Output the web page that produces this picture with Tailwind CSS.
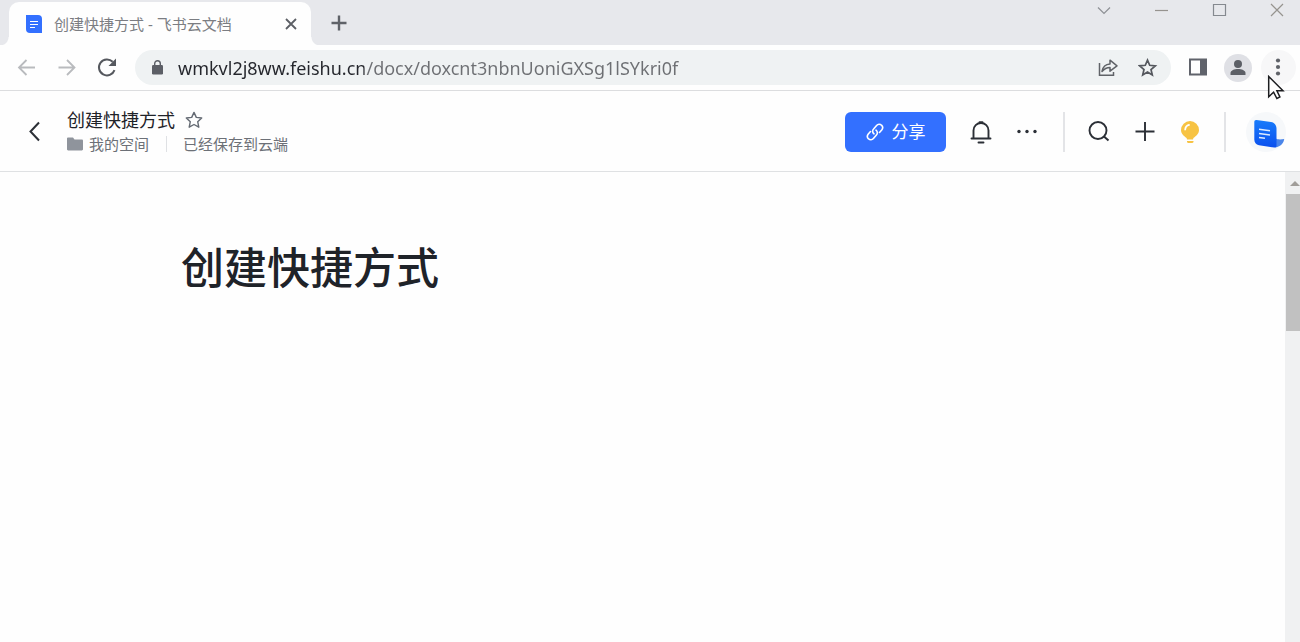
<!DOCTYPE html>
<html lang="zh-CN">
<head>
  <meta charset="UTF-8" />
  <meta name="viewport" content="width=device-width, initial-scale=1.0"/>
  <title>创建快捷方式 - 飞书云文档</title>
  <script src="https://cdn.jsdelivr.net/npm/@tailwindcss/browser@4"></script>
</head>
<body class="relative flex flex-col h-screen overflow-hidden bg-[#fefefe] text-[#1f2329] font-['Noto_Sans','Noto_Sans_CJK_SC',sans-serif]">

  <!-- Tab strip -->
  <div class="flex items-start h-[45px] shrink-0 bg-[#e7e8ec]">
    <div class="flex items-end self-stretch">
      <div class="w-[9px] h-2 bg-[radial-gradient(circle_at_0_0,#e7e8ec_8px,#fefefe_9px)]"></div>
      <div class="flex items-center w-[302px] h-[43px] pl-4 pr-3 rounded-t-[10px] bg-[#fefefe]">
        <svg class="w-[18px] h-[18px] shrink-0" viewBox="0 0 18 18">
          <path d="M1 0h12a4 4 0 0 1 4 4v14H5a4 4 0 0 1-4-4z" fill="#3370ff"/>
          <path d="M5 6.500h8M5 9.500h8M5 12.500h5" stroke="#fff" stroke-width="1.200"/>
        </svg>
        <span class="ml-[11px] flex-1 text-[15px] leading-5 text-[#7b7d82] whitespace-nowrap">创建快捷方式 - 飞书云文档</span>
        <button type="button" aria-label="关闭标签页" class="flex items-center justify-center w-4 h-4">
          <svg class="w-4 h-4" viewBox="0 0 16 16" fill="none" stroke="#5c5f65" stroke-width="1.800"><path d="M3 3l10 10M13 3L3 13"/></svg>
        </button>
      </div>
      <div class="w-[9px] h-2 bg-[radial-gradient(circle_at_100%_0,#e7e8ec_8px,#fefefe_9px)]"></div>
    </div>
    <button type="button" aria-label="新建标签页" class="flex items-center justify-center ml-[10px] mt-[14px] w-[18px] h-[18px]">
      <svg class="w-[18px] h-[18px]" viewBox="0 0 18 18" fill="none" stroke="#5f6268" stroke-width="2.400"><path d="M9 1.500v15M1.500 9h15"/></svg>
    </button>
    <div class="flex gap-[38px] ml-auto mr-3">
      <button type="button" aria-label="搜索标签页" class="w-5 h-5"><svg viewBox="0 0 20 20" fill="none" stroke="#8e9095" stroke-width="1.200"><path d="M4 7.500l6 6 6-6"/></svg></button>
      <button type="button" aria-label="最小化" class="w-5 h-5"><svg viewBox="0 0 20 20" fill="none" stroke="#96938f" stroke-width="1.200"><path d="M3 10.500h13"/></svg></button>
      <button type="button" aria-label="最大化" class="w-5 h-5"><svg viewBox="0 0 20 20" fill="none" stroke="#85898f" stroke-width="1.200"><path d="M3.500 4.500h12v11h-12z"/></svg></button>
      <button type="button" aria-label="关闭" class="w-5 h-5"><svg viewBox="0 0 20 20" fill="none" stroke="#96938f" stroke-width="1.200"><path d="M3 4l12 12M15 4L3 16"/></svg></button>
    </div>
  </div>

  <!-- Toolbar -->
  <div class="flex items-center h-[46px] shrink-0 border-b border-[#dcdddf] pl-4 pr-1">
    <div class="flex items-center gap-5">
      <button type="button" aria-label="后退" class="w-5 h-5"><svg viewBox="0 0 20 20" fill="none" stroke="#b9bbbe" stroke-width="1.800"><path d="M19 9.500H3M10.500 2L3 9.500l7.500 7.500"/></svg></button>
      <button type="button" aria-label="前进" class="w-5 h-5"><svg viewBox="0 0 20 20" fill="none" stroke="#b9bbbe" stroke-width="1.800"><path d="M2.500 9.500h16M11 2l7.500 7.500L11 17"/></svg></button>
      <button type="button" aria-label="重新加载" class="w-5 h-5"><svg viewBox="0 0 20 20"><path d="M18.500 12.100a8 8 0 1 1-1.800-8.300" fill="none" stroke="#55585e" stroke-width="2"/><path d="M20 .5V8h-7.500z" fill="#55585e"/></svg></button>
    </div>
    <label class="flex items-center flex-1 h-[35px] ml-[19px] pl-4 pr-[13px] rounded-full bg-[#eff2f3]">
      <svg class="w-[13px] h-[15px] shrink-0" viewBox="0 0 13 15"><rect x="1" y="5" width="11" height="9.500" rx="1.200" fill="#5c5f66"/><path d="M3.700 6V3.500a2.800 2.800 0 0 1 5.600 0V6" fill="none" stroke="#5c5f66" stroke-width="1.400"/></svg>
      <input type="text" aria-label="地址栏" value="wmkvl2j8ww.feishu.cn/docx/doxcnt3nbnUoniGXSg1lSYkri0f" class="flex-1 min-w-0 h-7 ml-[14px] text-[18px] outline-none text-transparent bg-clip-text bg-[linear-gradient(90deg,#24262c_186px,#6d6f73_186px)]"/>
      <button type="button" aria-label="分享此页面" class="w-[22px] h-5"><svg viewBox="0 0 22 20" fill="none" stroke="#606368" stroke-width="1.500"><path d="M1.500 5v12.200h14V14"/><path d="M4 13.500c.8-4.500 3.800-7.300 8-7.500V2.200l7 5.600-7 5.400V9.400c-3.200 0-5.700 1.200-8 4.100z" stroke-linejoin="round"/></svg></button>
      <button type="button" aria-label="为此页添加书签" class="w-5 h-5 ml-[18px]"><svg viewBox="0 0 20 20" fill="none" stroke="#55585e" stroke-width="1.700"><path d="M9.500 2.100l2.200 5.200 5.600.5-4.300 3.700 1.300 5.500-4.800-2.900L4.700 17 6 11.500 1.700 7.800l5.600-.5z"/></svg></button>
    </label>
    <button type="button" aria-label="侧边栏" class="w-5 h-5 ml-[18px]"><svg viewBox="0 0 20 20"><path fill-rule="evenodd" d="M0 .5h18v17H0zM2 2.500v13h9v-13z" fill="#60636b"/></svg></button>
    <button type="button" aria-label="个人资料" class="w-7 h-7 ml-[15px]"><svg viewBox="0 0 28 28"><circle cx="14" cy="14" r="14" fill="#dfe0e5"/><circle cx="14" cy="10" r="4" fill="#5c5f66"/><path d="M6.500 21v-2c0-2.500 4-4 7.500-4s7.500 1.500 7.500 4v2z" fill="#5c5f66"/></svg></button>
    <button type="button" aria-label="自定义及控制" class="w-[35px] h-[35px] ml-[9px] rounded-full bg-[#f7f7f8]"><svg viewBox="0 0 35 35" fill="#5f6268"><circle cx="17" cy="10.500" r="2.100"/><circle cx="17" cy="17" r="2.100"/><circle cx="17" cy="23.500" r="2.100"/></svg></button>
  </div>

  <!-- Document header -->
  <header class="flex items-center justify-between h-[81px] shrink-0 border-b border-[#dfe1e3] pt-0.5 pl-6 pr-[14px]">
    <div class="flex items-center">
      <button type="button" aria-label="返回" class="w-5 h-6"><svg viewBox="0 0 20 24" fill="none" stroke="#2b2f36" stroke-width="2"><path d="M15 2.500L6.500 11.500l8.500 9"/></svg></button>
      <div class="ml-[23px]">
        <div class="flex items-center h-6">
          <span class="text-[18px] leading-6">创建快捷方式</span>
          <button type="button" aria-label="收藏" class="w-[18px] h-[18px] ml-[10px]"><svg viewBox="0 0 18 18" fill="none" stroke="#646a73" stroke-width="1.400" stroke-linejoin="round"><path d="M9 1.400l2.300 5 5.400.6-4 3.700 1.100 5.500L9 13.500l-4.800 2.700 1.100-5.500-4-3.700 5.400-.6z"/></svg></button>
        </div>
        <div class="flex items-center h-6 text-[15px] leading-6 text-[#6c7077]">
          <svg class="w-4 h-[14px] mr-[6px]" viewBox="0 0 16 14"><path d="M0 1.500C0 .7.600.500 1.200.500H6l1.500 2h7.300c.7 0 1.200.4 1.200 1.200v8.600c0 .7-.5 1.200-1.200 1.200H1.200C.5 13.500 0 13 0 12.300z" fill="#8f949c"/></svg>
          <a href="#" class="text-[#6c7077]">我的空间</a>
          <div class="w-px h-4 ml-[17px] mr-4 bg-[#dfe1e4]"></div>
          <span>已经保存到云端</span>
        </div>
      </div>
    </div>
    <div class="flex items-center">
      <button type="button" class="flex items-center justify-center gap-2 w-[101px] h-10 rounded-md bg-[#3370ff] text-white text-[17px] leading-6">
        <svg class="w-[18px] h-[18px]" viewBox="0 0 18 18" fill="none" stroke="#fff" stroke-width="1.600" stroke-linecap="round"><path d="M8 10.800C6.200 9.400 6.300 7.300 7.600 6l3-3.600a3.300 3.300 0 0 1 4.900-.2c1.500 1.400 1.400 3.300.2 4.800l-2.200 2.500"/><path d="M10 7.200c1.800 1.400 1.700 3.500.4 4.800l-3 3.600a3.300 3.300 0 0 1-4.900.2C1 14.400 1.100 12.500 2.300 11l2.200-2.500"/></svg>
        分享
      </button>
      <button type="button" aria-label="通知" class="w-6 h-6 ml-[23px]"><svg viewBox="0 0 24 24" fill="none" stroke="#2b2f36" stroke-width="1.900" stroke-linecap="round"><path d="M4.500 18v-7.500a7.500 7.500 0 0 1 15 0V18M2.500 18.500h19M9.500 22.500h5"/><path d="M10.500 2.300h3"/></svg></button>
      <button type="button" aria-label="更多" class="w-6 h-6 ml-[22px]"><svg viewBox="0 0 24 24" fill="#2b2f36"><circle cx="4" cy="11.500" r="1.700"/><circle cx="12" cy="11.500" r="1.700"/><circle cx="20" cy="11.500" r="1.700"/></svg></button>
      <div class="w-0.5 h-10 ml-6 bg-[#e3e4e7]"></div>
      <button type="button" aria-label="搜索" class="w-6 h-6 ml-[22px]"><svg viewBox="0 0 24 24" fill="none" stroke="#2b2f36" stroke-width="1.900"><circle cx="11" cy="10.500" r="8.500"/><path d="M17 16.500l4.500 4"/></svg></button>
      <button type="button" aria-label="新建" class="w-6 h-6 ml-[22px]"><svg viewBox="0 0 24 24" fill="none" stroke="#2b2f36" stroke-width="1.900"><path d="M12 2v19M2.500 11.500h19"/></svg></button>
      <button type="button" aria-label="帮助" class="w-6 h-6 ml-[21px]"><svg viewBox="0 0 24 24"><path d="M12 1a9 9 0 0 0-9 9c0 3.700 2.600 5.700 5.600 8l.4 1.500h6l.4-1.500c3-2.300 5.600-4.300 5.600-8a9 9 0 0 0-9-9z" fill="#f7c343"/><path d="M9 21h6.500v.8c0 .7-.5 1.200-1.200 1.200h-4.100c-.7 0-1.200-.5-1.200-1.200z" fill="#f7c343"/><path d="M7.200 9.500a5.200 5.200 0 0 1 3.800-4.600" stroke="#fff" stroke-width="1.800" stroke-linecap="round" fill="none"/></svg></button>
      <div class="w-0.5 h-10 ml-[22px] bg-[#e3e4e7]"></div>
      <button type="button" aria-label="账号" class="w-10 h-10 ml-5"><svg viewBox="0 0 40 40">
        <defs><linearGradient id="doc" x1="0" y1="0" x2="0" y2="1"><stop offset="0" stop-color="#197cfb"/><stop offset="1" stop-color="#0b50ee"/></linearGradient></defs>
        <circle cx="20" cy="20" r="20" fill="#f6f8fa"/>
        <path d="M29 26c3 2 6 1.500 9.200 1-.5 4-3.500 7.500-8.700 8.500z" fill="#4b86ea"/>
        <path d="M8.300 10c0-1.500.8-2.200 2.200-2l14.500 2c3.500.6 5.500 3.200 5.500 6.500v17c0 1.500-.8 2.200-2.200 2L13 33.300c-3-.5-4.700-2.800-4.700-5.800z" fill="url(#doc)"/>
        <path d="M13 17.200l11 1.500M13 21.500l11 1.500M13 25.500l6 .8" stroke="#dcebff" stroke-width="1.600"/>
      </svg></button>
    </div>
  </header>

  <!-- Document body -->
  <div class="flex flex-1 min-h-0">
    <main class="flex-1 pl-[181px] pt-16">
      <h1 class="text-[43px] leading-[64px] font-medium">创建快捷方式</h1>
    </main>
    <div class="w-[15px] bg-[#f0f1f2] pl-px">
      <div class="flex items-center justify-end h-[22px]">
        <svg class="w-[10px] h-[5px]" viewBox="0 0 10 5"><path d="M5 0l5 5H0z" fill="#a09d99"/></svg>
      </div>
      <div class="h-[137px] bg-[#c1c1c1]"></div>
    </div>
  </div>

  <!-- Mouse pointer -->
  <svg class="absolute right-[15px] top-[75px] w-[18px] h-[25px] pointer-events-none" viewBox="0 0 18 25"><path d="M1.700 1.500v20.300l4.900-4.600 3.300 6.300 3-1.500-3-6.200h6.100z" fill="#fff" stroke="#1c1d20" stroke-width="1.500"/></svg>
</body>
</html>
